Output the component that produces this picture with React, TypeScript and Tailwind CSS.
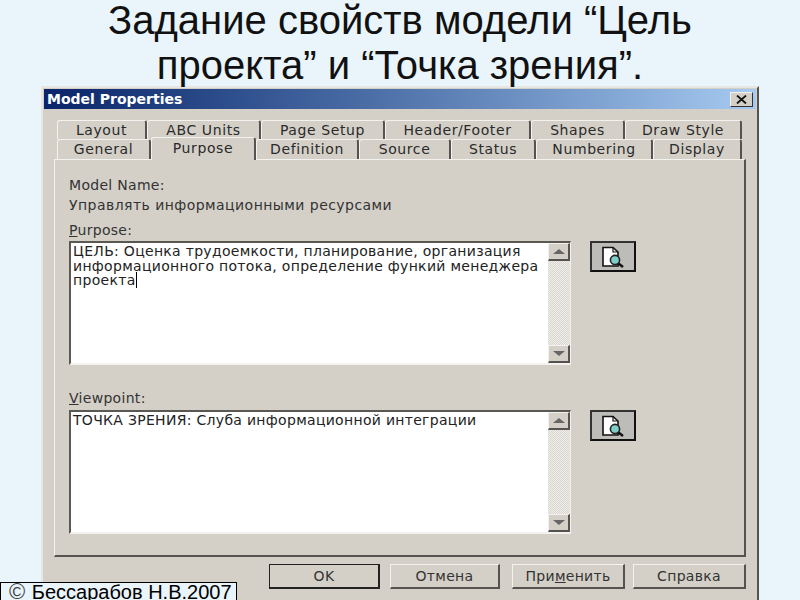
const row1 = [
  ["Layout", "w-[90px]"],
  ["ABC Units", "w-[114px]"],
  ["Page Setup", "w-[124px]"],
  ["Header/Footer", "w-[146px]"],
  ["Shapes", "w-[94px]"],
  ["Draw Style", "w-[117px]"],
];
const row2 = [
  ["General", "w-[94px]"],
  ["Purpose", "w-[105px]"],
  ["Definition", "w-[103px]"],
  ["Source", "w-[92px]"],
  ["Status", "w-[85px]"],
  ["Numbering", "w-[117px]"],
  ["Display", "w-[89px]"],
];

function Tab({ label, width }: { label: string; width: string }) {
  return (
    <div className={`${width} h-full shrink-0 flex items-center justify-center rounded-t-[3px] border-t border-l border-t-[#f4f2ee] border-l-[#f4f2ee] border-r-2 border-r-[#55534f] bg-[#d4d0c8] text-[#2a2a2a] tracking-[0.6px]`}>
      {label}
    </div>
  );
}

function Magnifier() {
  return (
    <button className="w-[46px] h-[31px] bg-[#bdbcb8] border-2 border-[#111] border-t-[#333] border-l-[#333] flex items-center justify-center shrink-0">
      <svg width="26" height="24" viewBox="0 0 26 24">
        <path d="M3 2.5H13L18 7V21H3Z" fill="#fff" stroke="#111" strokeWidth="1.6" />
        <path d="M13 2.5V7H18" fill="none" stroke="#111" strokeWidth="1.2" />
        <circle cx="15" cy="15" r="4.6" fill="#7fcfc8" stroke="#222" strokeWidth="1.6" />
        <path d="M18.5 18.5L23 22" stroke="#111" strokeWidth="2.4" />
      </svg>
    </button>
  );
}

function Arrow({ up }: { up?: boolean }) {
  return (
    <div className="h-[18px] bg-[#d4d0c8] border border-[#f4f2ee] border-r-2 border-b-2 border-r-[#55534f] border-b-[#55534f] flex items-center justify-center">
      <div className={`w-0 h-0 border-x-[6px] border-x-transparent ${up ? "border-b-[5px] border-b-[#666]" : "border-t-[5px] border-t-[#666]"}`} />
    </div>
  );
}

function Memo({ lines }: { lines: React.ReactNode }) {
  return (
    <div className="flex w-[502px] h-[124px] border-t-2 border-l-2 border-t-[#5a5853] border-l-[#5a5853] border-r border-b-2 border-r-[#f4f2ee] border-b-[#f4f2ee] shrink-0">
      <div className="w-[477px] bg-white pl-[2px] pt-[1px] text-[14px] leading-[14.5px] tracking-[0.3px] text-[#222] whitespace-nowrap">{lines}</div>
      <div className="flex-1 flex flex-col justify-between bg-[repeating-conic-gradient(#f0efeb_0_25%,#d8d5ce_0_50%)] bg-[length:2px_2px]">
        <Arrow up />
        <Arrow />
      </div>
    </div>
  );
}

function Btn({ children, width, def }: { children: React.ReactNode; width: string; def?: boolean }) {
  return (
    <button
      className={`${width} h-[25px] shrink-0 flex items-center justify-center text-[#333] bg-[#d4d0c8] tracking-[0.3px] border ${
        def
          ? "border-[#222] border-r-2 border-b-2"
          : "border-t-[#f4f2ee] border-l-[#f4f2ee] border-r-2 border-b-2 border-r-[#55534f] border-b-[#55534f]"
      }`}
    >
      {children}
    </button>
  );
}

export default function App() {
  return (
    <div className="relative w-[800px] h-[600px] overflow-hidden bg-[#e9f4fb] font-['Liberation_Sans',sans-serif]">
      <h1 className="h-[86px] text-center text-[40px] font-normal text-[#111]">
        <div className="h-[45px] leading-[40px]">Задание свойств модели “Цель</div>
        <div className="h-[41px] leading-[40px]">проекта” и “Точка зрения”.</div>
      </h1>

      <div className="ml-[41px] w-[718px] h-[514px] bg-[#d4d0c8] border-t-2 border-l-2 border-t-[#e8e6e2] border-l-[#e8e6e2] border-r-2 border-r-[#55534f] pt-px pl-px pr-px font-['DejaVu_Sans',sans-serif] text-[14px]">
        <div className="h-[20px] bg-gradient-to-r from-[#0a246a] to-[#a6caf0] flex items-center justify-between pl-[3px] pr-[3px]">
          <span className="font-bold text-white text-[14px]">Model Properties</span>
          <div className="w-[23px] h-[15px] bg-[#d4d0c8] border border-[#f4f2ee] border-r-[#333] border-b-[#333] flex items-center justify-center">
            <svg width="11" height="9" viewBox="0 0 11 9">
              <path d="M1 0.5L10 8.5M10 0.5L1 8.5" stroke="#111" strokeWidth="1.8" />
            </svg>
          </div>
        </div>

        <div className="pt-[11px] pl-[10px]">
          <div className="flex h-[19px] pl-[3px]">
            {row1.map(([l, w]) => (
              <Tab key={l} label={l} width={w} />
            ))}
          </div>
          <div className="relative z-10 flex h-[20px] pl-[3px]">
            {row2.map(([l, w]) =>
              l === "Purpose" ? (
                <div key={l} className={`${w} h-[23px] -mt-[2px] shrink-0 flex items-start justify-center rounded-t-[3px] border-t border-l border-t-[#f4f2ee] border-l-[#f4f2ee] border-r-2 border-r-[#55534f] bg-[#d4d0c8] text-[#2a2a2a] tracking-[0.6px]`}>
                  {l}
                </div>
              ) : (
                <Tab key={l} label={l} width={w} />
              )
            )}
          </div>

          <div className="w-[692px] h-[398px] border-t border-l border-t-[#f4f2ee] border-l-[#f4f2ee] border-r-2 border-b-2 border-r-[#55534f] border-b-[#55534f] pl-[14px] pt-[17px] text-[#333] tracking-[0.3px]">
            <div className="h-[20px] leading-[16px]">Model Name:</div>
            <div className="h-[25px] leading-[16px] tracking-[0.45px]">Управлять информационными ресурсами</div>
            <div className="h-[19px] leading-[16px]"><span className="underline">P</span>urpose:</div>
            <div className="flex items-start gap-[19px]">
              <Memo
                lines={
                  <>
                    ЦЕЛЬ: Оценка трудоемкости, планирование, организация
                    <br />
                    информационного потока, определение функий менеджера
                    <br />
                    проекта<span className="border-r border-black" />
                  </>
                }
              />
              <Magnifier />
            </div>
            <div className="h-[45px] pt-[25px] leading-[16px]"><span className="underline">V</span>iewpoint:</div>
            <div className="flex items-start gap-[19px]">
              <Memo lines="ТОЧКА ЗРЕНИЯ: Слуба информационной интеграции" />
              <Magnifier />
            </div>
          </div>

          <div className="flex pt-[7px] pl-[215px]">
            <Btn width="w-[111px]" def>OK</Btn>
            <div className="w-[10px]" />
            <Btn width="w-[110px]">Отмена</Btn>
            <div className="w-[12px]" />
            <Btn width="w-[113px]">При<span className="underline">м</span>енить</Btn>
            <div className="w-[8px]" />
            <Btn width="w-[113px]">Справка</Btn>
          </div>
        </div>
      </div>

      <div className="absolute left-0 bottom-0 w-[237px] h-[18px] bg-[#e9f4fb] border border-black border-b-0 pl-[8px] text-[20px] leading-[18px] text-black whitespace-nowrap">
        <span className="text-[#444] text-[22px] mr-[1px]">©</span> Бессарабов Н.В.2007
      </div>
    </div>
  );
}
